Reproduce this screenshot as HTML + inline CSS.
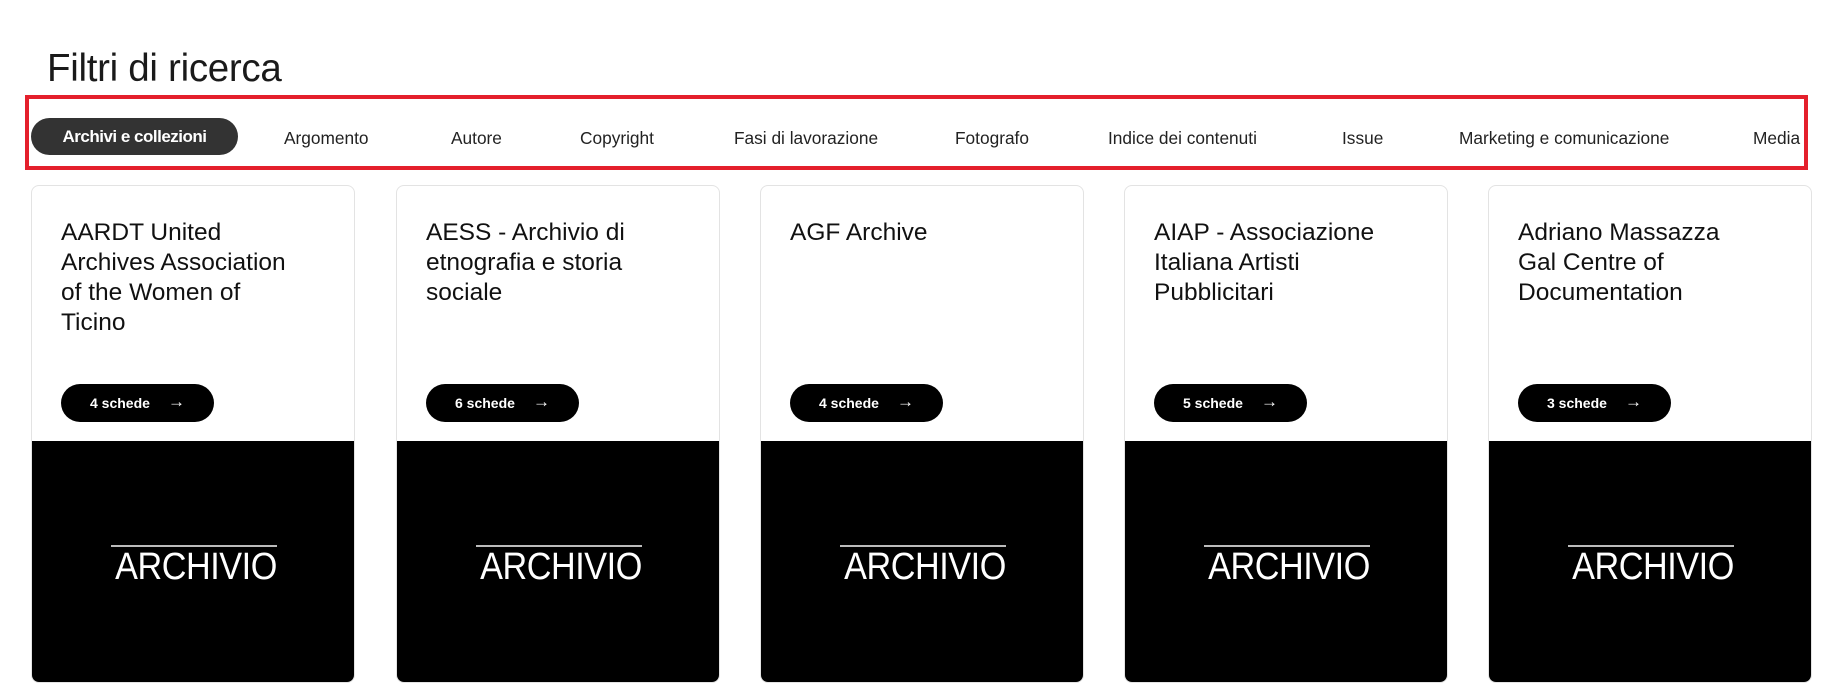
<!DOCTYPE html>
<html><head><meta charset="utf-8"><style>
*{margin:0;padding:0;box-sizing:border-box}
body{width:1827px;height:698px;background:#fff;font-family:"Liberation Sans",sans-serif;color:#111;position:relative;overflow:hidden}
h1{position:absolute;left:47px;top:47px;font-size:38.5px;font-weight:400;letter-spacing:-0.3px;color:#1a1a1a}
.box{position:absolute;left:25px;top:95px;width:1783px;height:75px;border:4px solid #e4202c}
.tab{position:absolute;top:128px;font-size:17.3px;color:#222;white-space:nowrap}
.pill{position:absolute;left:31px;top:118px;width:207px;height:37px;border-radius:19px;background:#333;color:#fff;font-size:17px;font-weight:700;text-align:center;line-height:37px;letter-spacing:-0.5px}
.card{position:absolute;top:185px;width:324px;height:498px;border:1px solid #e3e3e3;border-radius:8px;overflow:hidden;background:#fff}
.card h2{position:absolute;left:29px;top:32px;width:245px;font-size:24.5px;font-weight:400;line-height:30px;color:#111}
.btn{position:absolute;left:29px;top:198px;width:153px;height:38px;border-radius:19px;background:#000;color:#fff;font-size:14px;font-weight:700;line-height:38px;padding-left:29px}
.btn span{position:absolute;left:107px;top:-1px;font-weight:400;font-size:17px}
.img{position:absolute;left:0;top:255px;width:100%;height:243px;background:#000}
.logo{position:absolute;left:50%;top:104px;margin-left:-82px;width:166px;border-top:2px solid #bbb;color:#fff;font-size:38px;line-height:38px;padding-top:1px;text-align:center;white-space:nowrap}
.logo i{font-style:normal;display:block;transform:scaleX(0.9);transform-origin:center;letter-spacing:-0.5px;margin:0 -20px 0 -16px}
</style></head><body>
<h1>Filtri di ricerca</h1>
<div class="box"></div>
<div class="pill">Archivi e collezioni</div>
<div class="tab" style="left:284px">Argomento</div>
<div class="tab" style="left:451px">Autore</div>
<div class="tab" style="left:580px">Copyright</div>
<div class="tab" style="left:734px">Fasi di lavorazione</div>
<div class="tab" style="left:955px">Fotografo</div>
<div class="tab" style="left:1108px">Indice dei contenuti</div>
<div class="tab" style="left:1342px">Issue</div>
<div class="tab" style="left:1459px">Marketing e comunicazione</div>
<div class="tab" style="left:1753px">Media</div>

<div class="card" style="left:31px"><h2>AARDT United Archives Association of the Women of Ticino</h2><div class="btn">4 schede<span>→</span></div><div class="img"><div class="logo"><i>ARCHIVIO</i></div></div></div>
<div class="card" style="left:396px"><h2>AESS - Archivio di etnografia e storia sociale</h2><div class="btn">6 schede<span>→</span></div><div class="img"><div class="logo"><i>ARCHIVIO</i></div></div></div>
<div class="card" style="left:760px"><h2>AGF Archive</h2><div class="btn">4 schede<span>→</span></div><div class="img"><div class="logo"><i>ARCHIVIO</i></div></div></div>
<div class="card" style="left:1124px"><h2>AIAP - Associazione Italiana Artisti Pubblicitari</h2><div class="btn">5 schede<span>→</span></div><div class="img"><div class="logo"><i>ARCHIVIO</i></div></div></div>
<div class="card" style="left:1488px"><h2>Adriano Massazza Gal Centre of Documentation</h2><div class="btn">3 schede<span>→</span></div><div class="img"><div class="logo"><i>ARCHIVIO</i></div></div></div>
</body></html>
